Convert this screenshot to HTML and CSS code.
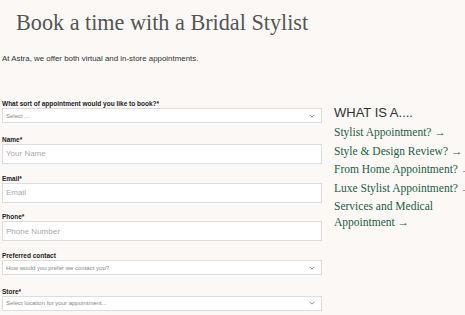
FILE: index.html
```html
<!DOCTYPE html>
<html lang="en">
<head>
<meta charset="utf-8">
<title>Book a time with a Bridal Stylist</title>
<link rel="stylesheet" href="styles.css">
</head>
<body>
<div class="page">
  <h1 class="title">Book a time with a Bridal Stylist</h1>
  <p class="intro">At Astra, we offer both virtual and in-store appointments.</p>
  <div class="layout">
    <form class="form">
      <div class="field">
        <label class="label">What sort of appointment would you like to book?*</label>
        <div class="select"><span>Select ...</span><svg class="chev" viewBox="0 0 8 5" width="6" height="4"><path d="M1 1l3 3 3-3" fill="none" stroke="#888" stroke-width="1.2"/></svg></div>
      </div>
      <div class="field">
        <label class="label">Name*</label>
        <div class="input">Your Name</div>
      </div>
      <div class="field">
        <label class="label">Email*</label>
        <div class="input">Email</div>
      </div>
      <div class="field">
        <label class="label">Phone*</label>
        <div class="input">Phone Number</div>
      </div>
      <div class="field">
        <label class="label">Preferred contact</label>
        <div class="select"><span>How would you prefer we contact you?</span><svg class="chev" viewBox="0 0 8 5" width="6" height="4"><path d="M1 1l3 3 3-3" fill="none" stroke="#888" stroke-width="1.2"/></svg></div>
      </div>
      <div class="field">
        <label class="label">Store*</label>
        <div class="select"><span>Select location for your appointment...</span><svg class="chev" viewBox="0 0 8 5" width="6" height="4"><path d="M1 1l3 3 3-3" fill="none" stroke="#888" stroke-width="1.2"/></svg></div>
      </div>
    </form>
    <aside class="what">
      <h2 class="what-title">WHAT IS A....</h2>
      <a class="link" href="#">Stylist Appointment? →</a>
      <a class="link" href="#">Style &amp; Design Review? →</a>
      <a class="link" href="#">From Home Appointment? →</a>
      <a class="link" href="#">Luxe Stylist Appointment? →</a>
      <a class="link" href="#">Services and Medical Appointment →</a>
    </aside>
  </div>
</div>
</body>
</html>
```
FILE: styles.css
```css
html, body {
  margin: 0;
  padding: 0;
  background: #fbf8f6;
  overflow: hidden;
}
.page {
  width: 480px;
  padding: 0 2px;
  font-family: "Liberation Sans", Arial, sans-serif;
  color: #333;
}
.title {
  margin: 0;
  padding: 9px 0 0 14px;
  font-family: "Liberation Serif", "Times New Roman", serif;
  font-weight: normal;
  font-size: 22.2px;
  line-height: 28px;
  color: #555;
}
.intro {
  margin: 17px 0 0;
  font-size: 7.9px;
  line-height: 10px;
  color: #333;
}
.layout {
  display: grid;
  grid-template-columns: 320px 150px;
  column-gap: 12px;
  margin-top: 36px;
}
.form {
  display: flex;
  flex-direction: column;
  gap: 10.8px;
}
.field {
  display: flex;
  flex-direction: column;
  gap: 1px;
}
.label {
  font-size: 6.5px;
  font-weight: bold;
  line-height: 7px;
  color: #222;
}
.select, .input {
  box-sizing: border-box;
  background: #fff;
  border: 1px solid #ddd;
  display: flex;
  align-items: center;
}
.select {
  height: 15px;
  margin-bottom: 2px;
  padding: 0 6px 0 3px;
  font-size: 6px;
  color: #888;
  justify-content: space-between;
}
.input {
  height: 20px;
  padding: 0 3px;
  font-size: 8px;
  color: #aaa;
}
.chev { display: block; }
.what {
  display: flex;
  flex-direction: column;
  padding-top: 5px;
}
.what-title {
  margin: 0 0 3px;
  font-size: 13px;
  font-weight: normal;
  line-height: 16px;
  color: #333;
}
.link {
  font-family: "Liberation Serif", "Times New Roman", serif;
  font-size: 11.5px;
  line-height: 16px;
  color: #1b5e45;
  text-decoration: none;
  margin-bottom: 2.6px;
}
```
